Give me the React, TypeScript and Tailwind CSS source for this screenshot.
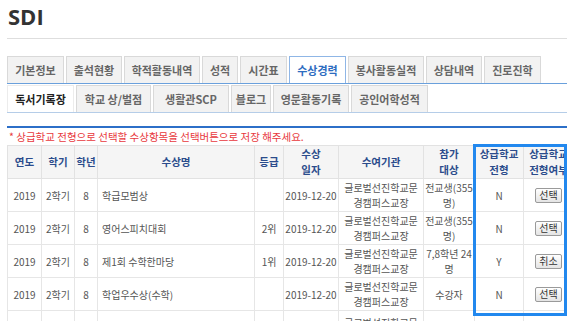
const KR = { fontFamily: '"Noto Sans CJK KR", "Noto Sans", sans-serif' }

const ROW1 = [
  { label: '기본정보', w: 'w-[57px]' },
  { label: '출석현황', w: 'w-[56px]' },
  { label: '학적활동내역', w: 'w-[76px]' },
  { label: '성적', w: 'w-[36px]' },
  { label: '시간표', w: 'w-[47px]' },
  { label: '수상경력', w: 'w-[57px]', active: true },
  { label: '봉사활동실적', w: 'w-[76px]' },
  { label: '상담내역', w: 'w-[56px]' },
  { label: '진로진학', w: 'w-[57px]' },
]

const ROW2 = [
  { label: '독서기록장', w: 'w-[67px]', active: true },
  { label: '학교 상/벌점', w: 'w-[75px]' },
  { label: '생활관SCP', w: 'w-[76px]' },
  { label: '블로그', w: 'w-[40px]' },
  { label: '영문활동기록', w: 'w-[76px]' },
  { label: '공인어학성적', w: 'w-[77px]' },
]

type Award = {
  name: string
  grade: string
  target: [string, string?]
  pick: 'N' | 'Y'
}

const AWARDS: Award[] = [
  { name: '학급모범상', grade: '', target: ['전교생(355', '명)'], pick: 'N' },
  { name: '영어스피치대회', grade: '2위', target: ['전교생(355', '명)'], pick: 'N' },
  { name: '제1회 수학한마당', grade: '1위', target: ['7,8학년 24', '명'], pick: 'Y' },
  { name: '학업우수상(수학)', grade: '', target: ['수강자'], pick: 'N' },
]

function Tab({ label, w, active, blue }: { label: string; w: string; active?: boolean; blue?: boolean }) {
  let tone = 'bg-[#f2f2f2] border-[#d9d9d9] text-[#666]'
  if (active && blue) tone = 'bg-white border-[#8fb6e6] text-[#2d6cc0]'
  else if (active) tone = 'bg-white border-[#ececec] text-[#222]'
  return (
    <div
      className={`${w} h-[27px] shrink-0 flex items-center justify-center border border-b-0 text-[11px] font-bold ${tone}`}
    >
      {label}
    </div>
  )
}

function PickButton({ label }: { label: string }) {
  return (
    <span className="inline-flex items-center justify-center h-[15px] px-[3px] border border-[#9a9a9a] rounded-[2px] bg-gradient-to-b from-white to-[#e4e4e4] text-[10px] leading-none text-[#333]">
      {label}
    </span>
  )
}

const th = 'border border-[#e2e2e2] bg-[#f5f5f5] text-[10.5px] font-bold text-[#2b4c8c] leading-[16px] text-center'
const td = 'border border-[#e6e6e6] text-[10px] text-[#555] leading-[15px] text-center'

function Institution() {
  return (
    <>
      글로벌선진학교문
      <br />
      경캠퍼스교장
    </>
  )
}

export default function App() {
  return (
    <div className="relative w-[567px] h-[321px] overflow-hidden bg-white" style={KR}>
      <div className="pl-[7px] pt-[2px]">
        <h1
          className="pl-[1px] text-[22px] font-bold leading-[28px] text-[#333]"
          style={{ fontFamily: '"Open Sans", "Noto Sans", sans-serif' }}
        >
          SDI
        </h1>
        <div className="mt-[8px] h-px bg-[#dedede]" />

        <div className="mt-[17px] flex gap-[2px] border-b border-[#6aa0dc]">
          {ROW1.map((t) => (
            <Tab key={t.label} label={t.label} w={t.w} active={t.active} blue />
          ))}
        </div>
        <div className="mt-[1px] flex gap-[2px] border-b border-[#b5cde8]">
          {ROW2.map((t) => (
            <Tab key={t.label} label={t.label} w={t.w} active={t.active} />
          ))}
        </div>

        <div className="mt-[13px] h-[2px] bg-[#2c6fc8]" />
        <p className="pl-[2px] h-[17px] text-[10.5px] leading-[17px] text-[#e8383d]">
          * 상급학교 전형으로 선택할 수상항목을 선택버튼으로 저장 해주세요.
        </p>

        <table className="table-fixed border-collapse w-[566px]">
          <colgroup>
            <col className="w-[34px]" />
            <col className="w-[33px]" />
            <col className="w-[23px]" />
            <col className="w-[157px]" />
            <col className="w-[29px]" />
            <col className="w-[55px]" />
            <col className="w-[85px]" />
            <col className="w-[51px]" />
            <col className="w-[49px]" />
            <col className="w-[50px]" />
          </colgroup>
          <thead>
            <tr className="h-[31px]">
              <th className={th}>연도</th>
              <th className={th}>학기</th>
              <th className={th}>학년</th>
              <th className={th}>수상명</th>
              <th className={th}>등급</th>
              <th className={th}>
                수상
                <br />
                일자
              </th>
              <th className={th}>수여기관</th>
              <th className={th}>
                참가
                <br />
                대상
              </th>
              <th className={`${th} whitespace-nowrap`}>
                상급학교
                <br />
                전형
              </th>
              <th className={`${th} whitespace-nowrap`}>
                상급학교
                <br />
                전형여부
              </th>
            </tr>
          </thead>
          <tbody>
            {AWARDS.map((a, i) => (
              <tr key={i} className="h-[33px]">
                <td className={td}>2019</td>
                <td className={td}>2학기</td>
                <td className={td}>8</td>
                <td className={`${td} text-left pl-[4px]`}>{a.name}</td>
                <td className={td}>{a.grade}</td>
                <td className={td}>2019-12-20</td>
                <td className={td}>
                  <Institution />
                </td>
                <td className={`${td} whitespace-nowrap overflow-hidden`}>
                  {a.target[0]}
                  {a.target[1] && (
                    <>
                      <br />
                      {a.target[1]}
                    </>
                  )}
                </td>
                <td className={td}>{a.pick}</td>
                <td className={td}>
                  <PickButton label={a.pick === 'Y' ? '취소' : '선택'} />
                </td>
              </tr>
            ))}
            {/* next row, only its top is in view */}
            <tr className="h-[33px]">
              <td className={td} />
              <td className={td} />
              <td className={td} />
              <td className={td} />
              <td className={td} />
              <td className={td} />
              <td className={`${td} align-top pt-[4px]`}>
                <Institution />
              </td>
              <td className={td} />
              <td className={td} />
              <td className={td} />
            </tr>
          </tbody>
        </table>
      </div>

      {/* highlight box drawn over the last two columns */}
      <div className="absolute left-[473px] top-[144px] w-[94px] h-[172px] border-[3px] border-[#2288ee] pointer-events-none" />
    </div>
  )
}
